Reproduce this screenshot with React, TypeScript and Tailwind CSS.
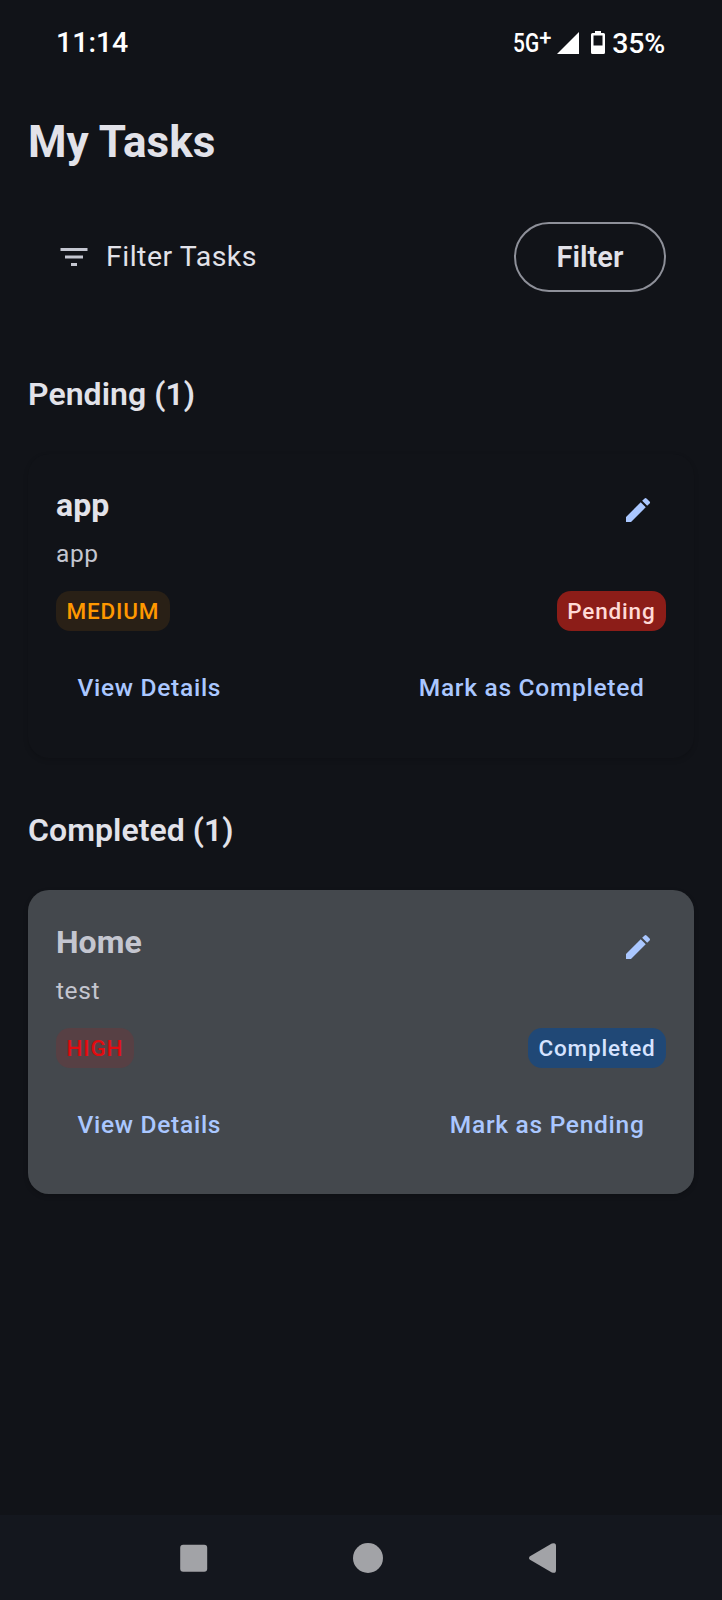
type Task = {
  title: string;
  description: string;
  priority: string;
  status: string;
  action: string;
  done: boolean;
};

const pending: Task[] = [
  { title: "app", description: "app", priority: "MEDIUM", status: "Pending", action: "Mark as Completed", done: false },
];

const completed: Task[] = [
  { title: "Home", description: "test", priority: "HIGH", status: "Completed", action: "Mark as Pending", done: true },
];

function StatusBar() {
  return (
    <header className="flex h-[84px] shrink-0 items-center justify-between pt-px pr-[57px] pl-[56px] text-white">
      <span className="text-[28.500px] leading-[32px] font-medium">11:14</span>
      <div className="flex items-center">
        <span className="flex w-[39px] items-center">
          <span className="w-[26px] origin-left scale-x-82 text-[25.500px] leading-[32px] font-medium">5G</span>
          <span className="-mt-[10px] text-[22px] leading-[26px] font-medium">+</span>
        </span>
        <svg className="ml-[5px] h-[22px] w-[22px]" viewBox="0 0 22 22" fill="currentColor">
          <path d="M22 0v22H0z" />
        </svg>
        <svg className="ml-[12px] h-[23px] w-[14px]" viewBox="0 0 14 23" fill="currentColor">
          <path fillRule="evenodd" d="M4 0h6v2h2.500A1.500 1.500 0 0 1 14 3.500V21.500a1.500 1.500 0 0 1-1.500 1.500H1.500A1.500 1.500 0 0 1 0 21.500V3.500A1.500 1.500 0 0 1 1.500 2H4zM2.500 4.500V14.500H11.500V4.500z" />
        </svg>
        <span className="ml-[7px] pt-[2px] text-[28.500px] leading-[32px] font-medium tracking-[-0.2px]">35%</span>
      </div>
    </header>
  );
}

function FilterRow() {
  return (
    <div className="mt-[22px] flex h-[70px] items-center justify-between px-[28px]">
      <div className="flex items-center gap-[14px]">
        <svg className="size-[36px] text-[#c4c6d0]" viewBox="0 0 24 24" fill="currentColor">
          <path d="M10 18h4v-2h-4v2zM3 6v2h18V6H3zm3 7h12v-2H6v2z" />
        </svg>
        <span className="text-[28.500px] leading-[42px] tracking-[0.5px]">Filter Tasks</span>
      </div>
      <button className="h-[70px] w-[152px] rounded-full border-2 border-[#8e9099] text-[29px] leading-[42px] font-semibold">
        Filter
      </button>
    </div>
  );
}

function TaskCard({ task }: { task: Task }) {
  return (
    <article
      className={
        task.done
          ? "flex h-[304px] flex-col rounded-[21px] bg-[#44484d] px-[28px] pt-[29px] shadow-[0_2px_5px_rgba(0,0,0,0.2)]"
          : "flex h-[304px] flex-col rounded-[21px] bg-[#111318] px-[28px] pt-[28px] shadow-[0_2px_5px_rgba(0,0,0,0.15)]"
      }
    >
      <div className="flex justify-between">
        <div>
          <h3 className={task.done ? "text-[32px] leading-[46px] font-bold text-[#c4c6d0]" : "text-[32px] leading-[46px] font-bold"}>
            {task.title}
          </h3>
          <p className="mt-[8px] text-[24.500px] leading-[35px] tracking-[0.6px] text-[#c4c6d0]">{task.description}</p>
        </div>
        <button className="flex size-[56px] items-center justify-center text-[#aac7ff]" aria-label="Edit">
          <svg className="size-[32px]" viewBox="0 0 24 24" fill="currentColor">
            <path d="M3 17.250V21h3.750L17.810 9.940l-3.750-3.750L3 17.250zM20.710 7.040a.996.996 0 0 0 0-1.410l-2.340-2.340a.996.996 0 0 0-1.410 0l-1.830 1.830 3.750 3.750 1.830-1.830z" />
          </svg>
        </button>
      </div>
      <div className="mt-[20px] flex items-center justify-between text-[22.500px] leading-[40px] font-medium tracking-[0.82px]">
        <span
          className={
            task.done
              ? "rounded-[14px] bg-[#574044] px-[10.500px] text-[#e30b10]"
              : "rounded-[14px] bg-[#292016] px-[10.500px] text-[#ff9800]"
          }
        >
          {task.priority}
        </span>
        <span
          className={
            task.done
              ? "rounded-[14px] bg-[#204876] px-[10.500px] text-[#d6e3ff]"
              : "rounded-[14px] bg-[#8c1d18] px-[10.500px] text-[#ffdad6]"
          }
        >
          {task.status}
        </span>
      </div>
      <div className="mt-[21px] flex h-[70px] items-center justify-between px-[21.500px] text-[24.500px] leading-[35px] font-medium tracking-[0.72px] text-[#aac7ff]">
        <button>View Details</button>
        <button>{task.action}</button>
      </div>
    </article>
  );
}

function Section({ label, tasks }: { label: string; tasks: Task[] }) {
  return (
    <section className="mb-[43px]">
      <h2 className="mb-[31px] text-[32px] leading-[58px] font-semibold tracking-[0.05px]">
        {label} ({tasks.length})
      </h2>
      {tasks.map((task) => (
        <TaskCard key={task.title} task={task} />
      ))}
    </section>
  );
}

export default function App() {
  return (
    <div className="flex h-[1600px] w-[722px] flex-col bg-[#111318] font-[Roboto,sans-serif] text-[#e2e2e9]">
      <StatusBar />
      <main className="flex flex-1 flex-col px-[28px]">
        <h1 className="text-[44px] leading-[116px] font-bold tracking-[0.1px]">My Tasks</h1>
        <FilterRow />
        <div className="mt-[73px]">
          <Section label="Pending" tasks={pending} />
          <Section label="Completed" tasks={completed} />
        </div>
      </main>
      <nav className="flex h-[85px] shrink-0 items-center bg-[#14171e] pt-px pl-[180px] text-[#a2a3a7]">
        <svg className="size-[28px]" viewBox="0 0 28 28" fill="currentColor">
          <rect width="27" height="27" x="0.200" y="0.800" rx="3" />
        </svg>
        <svg className="ml-[145px] size-[30px]" viewBox="0 0 30 30" fill="currentColor">
          <circle cx="15" cy="15" r="15" />
        </svg>
        <svg className="ml-[146px] h-[30px] w-[27px]" viewBox="0 0 27 30" fill="currentColor">
          <path d="M1 13.200 22.800.6Q27-1 27 3V27Q27 31 22.800 29.400L1 16.800Q-1 15 1 13.200z" />
        </svg>
      </nav>
    </div>
  );
}
